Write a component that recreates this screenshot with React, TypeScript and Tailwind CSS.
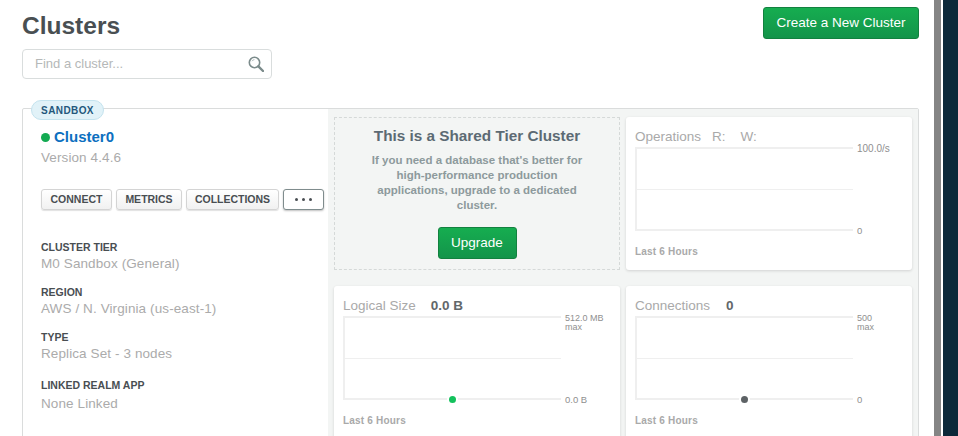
const sans = "font-['Liberation_Sans',Arial,sans-serif]";

interface ChartCardProps {
    title: React.ReactNode;
    top: string;
    bottom: string;
    max?: boolean;
    dot?: string;
    cardClass: string;
}

const ChartCard: React.FC<ChartCardProps> = ({ title, top, bottom, max, dot, cardClass }) => (
    <div className={`rounded-[3px] bg-white pl-[9px] pt-[10px] shadow-[0_1px_3px_rgba(0,0,0,0.14)] ${cardClass}`}>
        <div className="flex h-[19px] items-center text-[13.5px] leading-[19px] text-[#a9a9a9]">{title}</div>
        <div className="mt-px flex w-[270px]">
            <div className="relative flex h-[84px] w-[218px] shrink-0 flex-col justify-center border-y-2 border-l-2 border-[#efefef]">
                <div className="h-px w-full bg-[#efefef]" />
                {dot && (
                    <span className={`absolute bottom-[-4.5px] left-[104px] h-[7px] w-[7px] rounded-full ring-2 ring-white ${dot}`} />
                )}
            </div>
            <div className="ml-1 flex h-[84px] flex-col justify-between text-[9.5px] leading-[10px] text-[#8f8f8f]">
                <div>
                    <div className={max ? 'mt-[-3px] text-[9px]' : 'mt-[-3px] text-[10px]'}>{top}</div>
                    {max && <div className="mt-[-1px] text-[9px] leading-[10px]">max</div>}
                </div>
                <div className="mb-[-5px]">{bottom}</div>
            </div>
        </div>
        <div className="mt-[14px] text-[10px] font-bold leading-[14px] tracking-[0.2px] text-[#a9a9a9]">Last 6 Hours</div>
    </div>
);

const ActionButton: React.FC<{ label: string; className: string }> = ({ label, className }) => (
    <button className={`flex h-[21px] items-center justify-center rounded-[3px] border border-[#d4d4d4] bg-gradient-to-b from-white to-[#f1f1f1] text-[10.5px] font-bold text-[#494e52] shadow-[0_1px_1px_rgba(0,0,0,0.12)] ${className}`}>
        {label}
    </button>
);

const Detail: React.FC<{ label: string; value: string; className?: string; gap?: string }> = ({ label, value, className, gap = 'mt-px' }) => (
    <div className={className}>
        <div className="text-[10.5px] font-bold leading-[14px] text-[#494e52]">{label}</div>
        <div className={`${gap} text-[13.5px] leading-[17px] tracking-[0.1px] text-[#ababab]`}>{value}</div>
    </div>
);

export default function App() {
    return (
        <div className={`flex h-[436px] w-[958px] overflow-hidden bg-white ${sans}`}>
            <main className="w-[934px] shrink-0 pl-[22px] pr-[15px]">
                <div className="flex items-start justify-between">
                    <div>
                        <h1 className="mt-[10px] text-[24.5px] font-bold leading-[32px] text-[#494f52]">Clusters</h1>
                        <div className="mt-[7px] flex h-[30px] w-[250px] items-center justify-between rounded-[4px] border border-[#d9dddd] pl-3 pr-[7px] text-[13px] text-[#b5b8b8]">
                            Find a cluster...
                            <svg width="16" height="16" viewBox="0 0 16 16" fill="none">
                                <circle cx="6.5" cy="6.5" r="5.2" stroke="#7b8b8b" strokeWidth="1.6" />
                                <path d="M4 5.2a3 3 0 0 1 2.4-1.6" stroke="#b5c0c0" strokeWidth="1" />
                                <path d="M10.4 10.4 15 15" stroke="#7b8b8b" strokeWidth="2.4" strokeLinecap="round" />
                            </svg>
                        </div>
                    </div>
                    <button className="mt-[7px] h-[32px] w-[156px] rounded-[3px] border border-[#12813f] bg-gradient-to-b from-[#16ad50] to-[#13944a] text-[13.5px] text-white">
                        Create a New Cluster
                    </button>
                </div>

                <section className="relative mt-[29px] flex h-[400px] rounded-t-[2px] border border-[#dadcdc]">
                    <span className="absolute left-2 top-[-9px] flex h-[20px] w-[73px] items-center justify-center rounded-full border border-[#c4e3ee] bg-[#e1f2f8] text-[10px] font-bold tracking-[0.4px] text-[#24587c]">
                        SANDBOX
                    </span>

                    <div className="w-[305px] shrink-0 pl-[18px] pt-[19px]">
                        <div className="flex items-center gap-1">
                            <span className="h-[9px] w-[9px] rounded-full bg-[#13aa52]" />
                            <span className="text-[15px] font-bold leading-[18px] text-[#0c6fc0]">Cluster0</span>
                        </div>
                        <div className="mt-[3px] text-[13.5px] leading-[18px] tracking-[0.1px] text-[#ababab]">Version 4.4.6</div>

                        <div className="mt-[22px] flex gap-[4px]">
                            <ActionButton label="CONNECT" className="w-[71px]" />
                            <ActionButton label="METRICS" className="w-[66px]" />
                            <ActionButton label="COLLECTIONS" className="w-[93px]" />
                            <button className="flex h-[21px] w-[41px] items-center justify-center gap-1 rounded-[3px] border border-[#7f8c8d] bg-white shadow-[0_1px_2px_rgba(0,0,0,0.25)]">
                                <span className="h-[3px] w-[3px] rounded-full bg-[#494e52]" />
                                <span className="h-[3px] w-[3px] rounded-full bg-[#494e52]" />
                                <span className="h-[3px] w-[3px] rounded-full bg-[#494e52]" />
                            </button>
                        </div>

                        <Detail label="CLUSTER TIER" value="M0 Sandbox (General)" className="mt-[30px]" />
                        <Detail label="REGION" value="AWS / N. Virginia (us-east-1)" className="mt-[13px]" />
                        <Detail label="TYPE" value="Replica Set - 3 nodes" className="mt-[13px]" />
                        <Detail label="LINKED REALM APP" value="None Linked" className="mt-[16px]" gap="mt-[3px]" />
                    </div>

                    <div className="grid flex-1 grid-cols-[286px_286px] content-start gap-x-[6px] gap-y-[16px] bg-[#f3f5f4] pl-[6px] pt-2">
                        <div className="flex h-[153px] flex-col items-center border border-dashed border-[#d5d9d8] pt-[3px]">
                            <h2 className="mt-[5px] text-[15.3px] font-bold leading-[20px] text-[#5c6a73]">This is a Shared Tier Cluster</h2>
                            <p className="mt-[7px] w-[225px] text-center text-[11.5px] font-bold leading-[15px] text-[#8d9a9c]">
                                If you need a database that's better for high-performance production applications, upgrade to a dedicated cluster.
                            </p>
                            <button className="mt-[14px] h-[32px] w-[79px] rounded-[3px] border border-[#12813f] bg-gradient-to-b from-[#16ad50] to-[#13944a] text-[13.5px] text-white">
                                Upgrade
                            </button>
                        </div>

                        <ChartCard
                            cardClass="h-[153px]"
                            title={<><span>Operations</span><span className="ml-[11px]">R:</span><span className="ml-[15px]">W:</span></>}
                            top="100.0/s"
                            bottom="0"
                        />
                        <ChartCard
                            cardClass="h-[200px]"
                            title={<><span>Logical Size</span><span className="ml-[15px] font-bold text-[#62676a]">0.0 B</span></>}
                            top="512.0 MB"
                            bottom="0.0 B"
                            max
                            dot="bg-[#13c15c]"
                        />
                        <ChartCard
                            cardClass="h-[200px]"
                            title={<><span>Connections</span><span className="ml-4 font-bold text-[#62676a]">0</span></>}
                            top="500"
                            bottom="0"
                            max
                            dot="bg-[#5d6265]"
                        />
                    </div>
                </section>
            </main>
            <div className="h-full w-[7px] shrink-0 bg-[#858585]" />
            <div className="h-full w-[2px] shrink-0 bg-white" />
            <div className="h-full flex-1 bg-[#0b2839]" />
        </div>
    );
}
